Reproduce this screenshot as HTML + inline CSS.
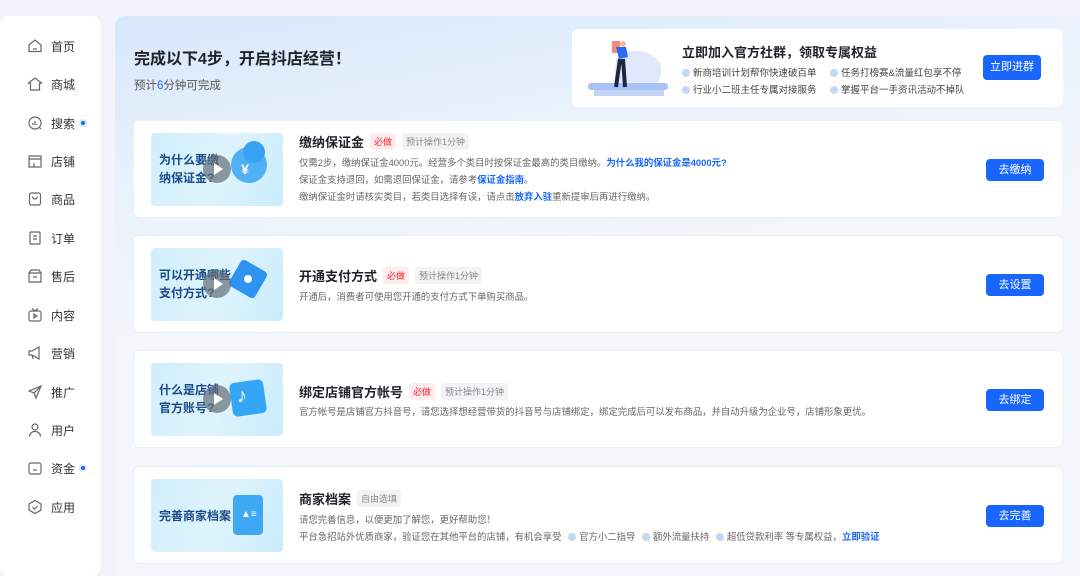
<!DOCTYPE html>
<html><head><meta charset="utf-8"><style>
*{margin:0;padding:0;box-sizing:border-box}
body{width:1080px;height:565px;overflow:hidden;background:#f1f4fa;font-family:"Liberation Sans","Noto Sans CJK SC",sans-serif;position:relative;color:#252933}
.side{position:absolute;left:0;top:16px;width:101px;height:560px;background:#fff;border-radius:10px}
.nav{position:absolute;left:27px;font-size:12px;color:#333;display:flex;align-items:center;height:16px}
.nav svg{width:16px;height:16px;margin-right:8px}
.dot{width:4px;height:4px;border-radius:50%;background:#1966ff;margin-left:6px;box-shadow:0 0 0 2px #dce8ff}
.main{position:absolute;left:115px;top:16px;width:980px;height:560px;border-radius:10px;background:linear-gradient(170deg,#d8e7fb 0%,#eaf2fd 25%,#f3f6fb 45%,#f3f6fb 100%)}
.h1{position:absolute;left:134px;top:45px;font-size:16px;font-weight:bold;color:#1f2329}
.sub{position:absolute;left:134px;top:77px;font-size:11.5px;color:#555}
.sub b{color:#1966ff;font-weight:normal}
.promo{position:absolute;left:572px;top:29px;width:491px;height:78px;background:#fff;border-radius:6px}
.btn{position:absolute;background:#1966ff;color:#fff;font-size:11px;border-radius:4px;text-align:center}
.card{position:absolute;left:133px;width:930px;height:98px;background:#fff;border-radius:6px;border:1px solid #eceef2}
.thumb{position:absolute;left:17px;top:12px;width:132px;height:73px;border-radius:4px;background:linear-gradient(110deg,#cfeefc 0%,#dff4fd 50%,#c9ecfb 100%);overflow:hidden}
.thumb .t{position:absolute;left:8px;top:18px;font-size:12px;font-weight:bold;color:#1a4a8a;line-height:18px}
.play{position:absolute;left:52px;top:22px;width:28px;height:28px;border-radius:50%;background:rgba(100,110,120,.7)}
.play:after{content:"";position:absolute;left:11px;top:8px;border-left:9px solid #fff;border-top:6px solid transparent;border-bottom:6px solid transparent}
.title{position:absolute;left:165px;font-size:13px;font-weight:bold;color:#1f2329;display:flex;align-items:center}
.tag{font-size:9px;font-weight:normal;padding:2px 4px;border-radius:3px;margin-left:6px}
.req{background:#ffecec;color:#f5222d}
.gray{background:#f2f3f5;color:#888}
.desc{position:absolute;left:165px;font-size:9.4px;color:#666;line-height:17px;white-space:nowrap}
.desc a{color:#1966ff;font-weight:bold;text-decoration:none}
.cb{display:inline-block;width:8px;height:8px;border-radius:50%;background:#c6d6f5;margin:0 3px 0 4px;vertical-align:-1px}
.pt{font-size:9.5px;color:#444;position:absolute}
</style></head><body>
<div class="side"></div>
<div class="nav" style="top:38px"><svg viewBox="0 0 16 16" fill="none" stroke="#666" stroke-width="1.2"><path d="M2 7 8 2l6 5v6.5H2z"/><path d="M6 11h4"/></svg>首页</div>
<div class="nav" style="top:76px"><svg viewBox="0 0 16 16" fill="none" stroke="#666" stroke-width="1.2"><path d="M1.5 7 8 2l6.5 5-2 .5V14h-9V7.5z"/></svg>商城</div>
<div class="nav" style="top:115px"><svg viewBox="0 0 16 16" fill="none" stroke="#666" stroke-width="1.2"><circle cx="8" cy="8" r="6"/><path d="M6 10V8M8 10V6M10 10V9M12 12l2 2"/></svg>搜索<span class="dot"></span></div>
<div class="nav" style="top:153px"><svg viewBox="0 0 16 16" fill="none" stroke="#666" stroke-width="1.2"><path d="M2 3h12v11H2zM2 6h12M7 10v4"/></svg>店铺</div>
<div class="nav" style="top:191px"><svg viewBox="0 0 16 16" fill="none" stroke="#666" stroke-width="1.2"><rect x="2.5" y="2" width="11" height="12" rx="2"/><path d="M5.5 5.5a2.5 2.5 0 0 0 5 0"/></svg>商品</div>
<div class="nav" style="top:230px"><svg viewBox="0 0 16 16" fill="none" stroke="#666" stroke-width="1.2"><rect x="3" y="2" width="10" height="12" rx="1"/><path d="M6 6h4M6 9h4"/></svg>订单</div>
<div class="nav" style="top:268px"><svg viewBox="0 0 16 16" fill="none" stroke="#666" stroke-width="1.2"><path d="M2 5h12v9H2zM2 5l2-3h8l2 3M6 9h4"/></svg>售后</div>
<div class="nav" style="top:307px"><svg viewBox="0 0 16 16" fill="none" stroke="#666" stroke-width="1.2"><rect x="2" y="4" width="12" height="10" rx="2"/><path d="M5 1.5 8 4l3-2.5M7 7v4l3-2z"/></svg>内容</div>
<div class="nav" style="top:345px"><svg viewBox="0 0 16 16" fill="none" stroke="#666" stroke-width="1.2"><path d="M2 6h3l7-4v12L5 10H2zM5 10l1 4"/></svg>营销</div>
<div class="nav" style="top:384px"><svg viewBox="0 0 16 16" fill="none" stroke="#666" stroke-width="1.2"><path d="M14 2 2 7l5 2 2 5zM7 9l7-7"/></svg>推广</div>
<div class="nav" style="top:422px"><svg viewBox="0 0 16 16" fill="none" stroke="#666" stroke-width="1.2"><circle cx="8" cy="5" r="3"/><path d="M2.5 14.5c0-3 2.5-5 5.5-5s5.5 2 5.5 5"/></svg>用户</div>
<div class="nav" style="top:460px"><svg viewBox="0 0 16 16" fill="none" stroke="#666" stroke-width="1.2"><rect x="2" y="3" width="12" height="11" rx="2"/><path d="M6 10h4"/></svg>资金<span class="dot"></span></div>
<div class="nav" style="top:499px"><svg viewBox="0 0 16 16" fill="none" stroke="#666" stroke-width="1.2"><path d="M8 1.5 14 5v6l-6 3.5L2 11V5z"/><path d="M5.5 8l2 2 3-3"/></svg>应用</div>

<div class="main"></div>
<div class="h1">完成以下4步，开启抖店经营！</div>
<div class="sub">预计<b>6</b>分钟可完成</div>

<div class="promo">
<svg style="position:absolute;left:14px;top:10px" width="86" height="58" viewBox="0 0 86 58"><path d="M30 20c10-12 30-10 40 0 8 6 6 20 0 26H28z" fill="#dfe9fb"/><rect x="2" y="44" width="80" height="7" rx="3" fill="#a7c2f5"/><rect x="8" y="51" width="70" height="6" fill="#c3d6f8"/><rect x="26" y="2" width="8" height="12" fill="#f08a7a"/><path d="M30 8h10l2 10-9 2z" fill="#2a6bf2"/><path d="M34 20 30 48M37 20l2 28" stroke="#1d2540" stroke-width="4"/><circle cx="37" cy="5" r="3" fill="#f2b8a0"/></svg>
<div style="position:absolute;left:110px;top:13px;font-size:13px;font-weight:bold;color:#1f2329">立即加入官方社群，领取专属权益</div>
<div class="pt" style="left:110px;top:36px"><span class="cb" style="margin-left:0"></span>新商培训计划帮你快速破百单</div>
<div class="pt" style="left:258px;top:36px"><span class="cb" style="margin-left:0"></span>任务打榜赛&amp;流量红包享不停</div>
<div class="pt" style="left:110px;top:53px"><span class="cb" style="margin-left:0"></span>行业小二班主任专属对接服务</div>
<div class="pt" style="left:258px;top:53px"><span class="cb" style="margin-left:0"></span>掌握平台一手资讯活动不掉队</div>
<div class="btn" style="left:411px;top:26px;width:58px;height:25px;line-height:25px">立即进群</div>
</div>

<div class="card" style="top:120px">
<div class="thumb"><div class="t">为什么要缴<br>纳保证金?</div><div style="position:absolute;left:80px;top:14px;width:36px;height:36px;border-radius:50%;background:#4fb0f5"></div><div style="position:absolute;left:92px;top:8px;width:22px;height:22px;border-radius:50%;background:#3aa2f2"></div><div style="position:absolute;left:80px;top:28px;color:#fff;font-size:14px;font-weight:bold;width:28px;text-align:center">¥</div><div class="play"></div></div>
<div class="title" style="top:11px">缴纳保证金<span class="tag req">必做</span><span class="tag gray">预计操作1分钟</span></div>
<div class="desc" style="top:33px">仅需2步，缴纳保证金4000元。经营多个类目时按保证金最高的类目缴纳。<a>为什么我的保证金是4000元?</a><br>保证金支持退回，如需退回保证金，请参考<a>保证金指南</a>。<br>缴纳保证金时请核实类目，若类目选择有误，请点击<a>放弃入驻</a>重新提审后再进行缴纳。</div>
<div class="btn" style="left:852px;top:38px;width:58px;height:22px;line-height:22px">去缴纳</div>
</div>

<div class="card" style="top:235px">
<div class="thumb"><div class="t">可以开通哪些<br>支付方式?</div><div style="position:absolute;left:82px;top:16px;width:30px;height:30px;background:#2c94f0;transform:rotate(30deg);border-radius:4px"></div><div style="position:absolute;left:93px;top:27px;width:8px;height:8px;border-radius:50%;background:#fff"></div><div class="play"></div></div>
<div class="title" style="top:30px">开通支付方式<span class="tag req">必做</span><span class="tag gray">预计操作1分钟</span></div>
<div class="desc" style="top:52px">开通后，消费者可使用您开通的支付方式下单购买商品。</div>
<div class="btn" style="left:852px;top:38px;width:58px;height:22px;line-height:22px">去设置</div>
</div>

<div class="card" style="top:350px">
<div class="thumb"><div class="t">什么是店铺<br>官方账号?</div><div style="position:absolute;left:80px;top:18px;width:34px;height:34px;background:#35a6f5;border-radius:5px;transform:rotate(-8deg)"></div><div style="position:absolute;left:86px;top:22px;color:#fff;font-size:20px;font-weight:bold">♪</div><div class="play"></div></div>
<div class="title" style="top:31px">绑定店铺官方帐号<span class="tag req">必做</span><span class="tag gray">预计操作1分钟</span></div>
<div class="desc" style="top:52px">官方帐号是店铺官方抖音号，请您选择想经营带货的抖音号与店铺绑定，绑定完成后可以发布商品，并自动升级为企业号，店铺形象更优。</div>
<div class="btn" style="left:852px;top:38px;width:58px;height:22px;line-height:22px">去绑定</div>
</div>

<div class="card" style="top:466px">
<div class="thumb"><div class="t" style="top:28px">完善商家档案</div><div style="position:absolute;left:82px;top:16px;width:30px;height:40px;background:#3ea8f5;border-radius:4px"></div><div style="position:absolute;left:90px;top:30px;width:14px;height:12px;color:#fff;font-size:10px">▲≡</div></div>
<div class="title" style="top:22px">商家档案<span class="tag gray">自由选填</span></div>
<div class="desc" style="top:44px">请您完善信息，以便更加了解您，更好帮助您！<br>平台急招站外优质商家，验证您在其他平台的店铺，有机会享受 <span class="cb"></span>官方小二指导 <span class="cb"></span>额外流量扶持 <span class="cb"></span>超低贷款利率 等专属权益，<a>立即验证</a></div>
<div class="btn" style="left:852px;top:38px;width:58px;height:22px;line-height:22px">去完善</div>
</div>
</body></html>
